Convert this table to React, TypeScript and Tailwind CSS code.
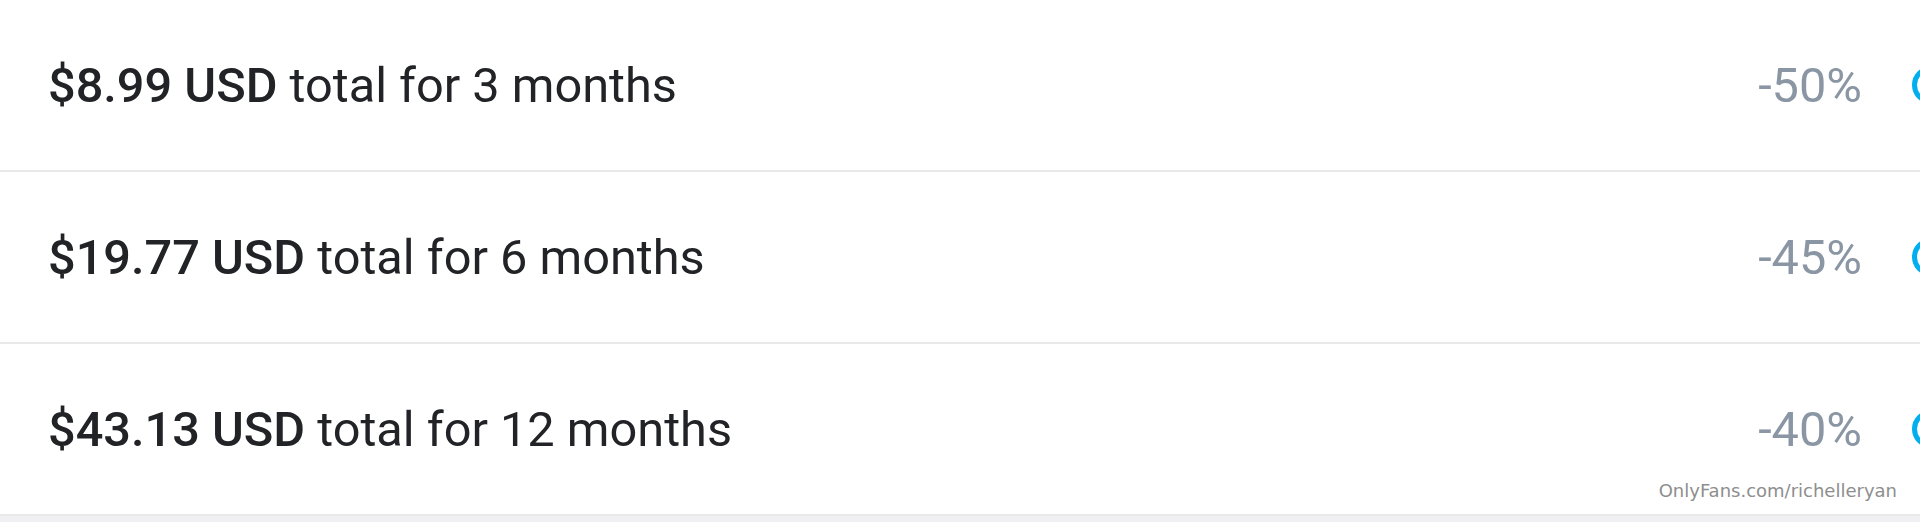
import React from "react";

const rows = [
  { price: "$8.99 USD", rest: " total for 3 months", pct: "-50%" },
  { price: "$19.77 USD", rest: " total for 6 months", pct: "-45%" },
  { price: "$43.13 USD", rest: " total for 12 months", pct: "-40%" },
];

export default function App() {
  return (
    <div className="relative w-[1920px] h-[522px] overflow-hidden bg-white" style={{ fontFamily: "Roboto, 'Liberation Sans', sans-serif" }}>
      <div className="flex flex-col">
        {rows.map((r, i) => (
          <div key={i} className="flex items-center h-[172px] pl-[48px] border-b-2 border-[#e9e9ea]">
            <div className="flex-1 text-[48.7px] leading-none text-[#222326] whitespace-nowrap pt-[2px]">
              <span className="font-medium">{r.price}</span>
              <span>{r.rest}</span>
            </div>
            <div className="text-[48.7px] leading-none text-[#8a96a3] pt-[2px]">{r.pct}</div>
            <div className="ml-[50px] mr-[-30px] w-[38px] h-[38px] rounded-full border-[5px] border-[#00aff0] shrink-0" />
          </div>
        ))}
        <div className="h-[20px] bg-[#f0f0f3]" />
      </div>
      <div
        className="absolute top-[480px] right-[23px] text-[18px] leading-[21px] text-[#8e8e8e]"
        style={{ fontFamily: "'DejaVu Sans', sans-serif" }}
      >
        OnlyFans.com/richelleryan
      </div>
    </div>
  );
}
